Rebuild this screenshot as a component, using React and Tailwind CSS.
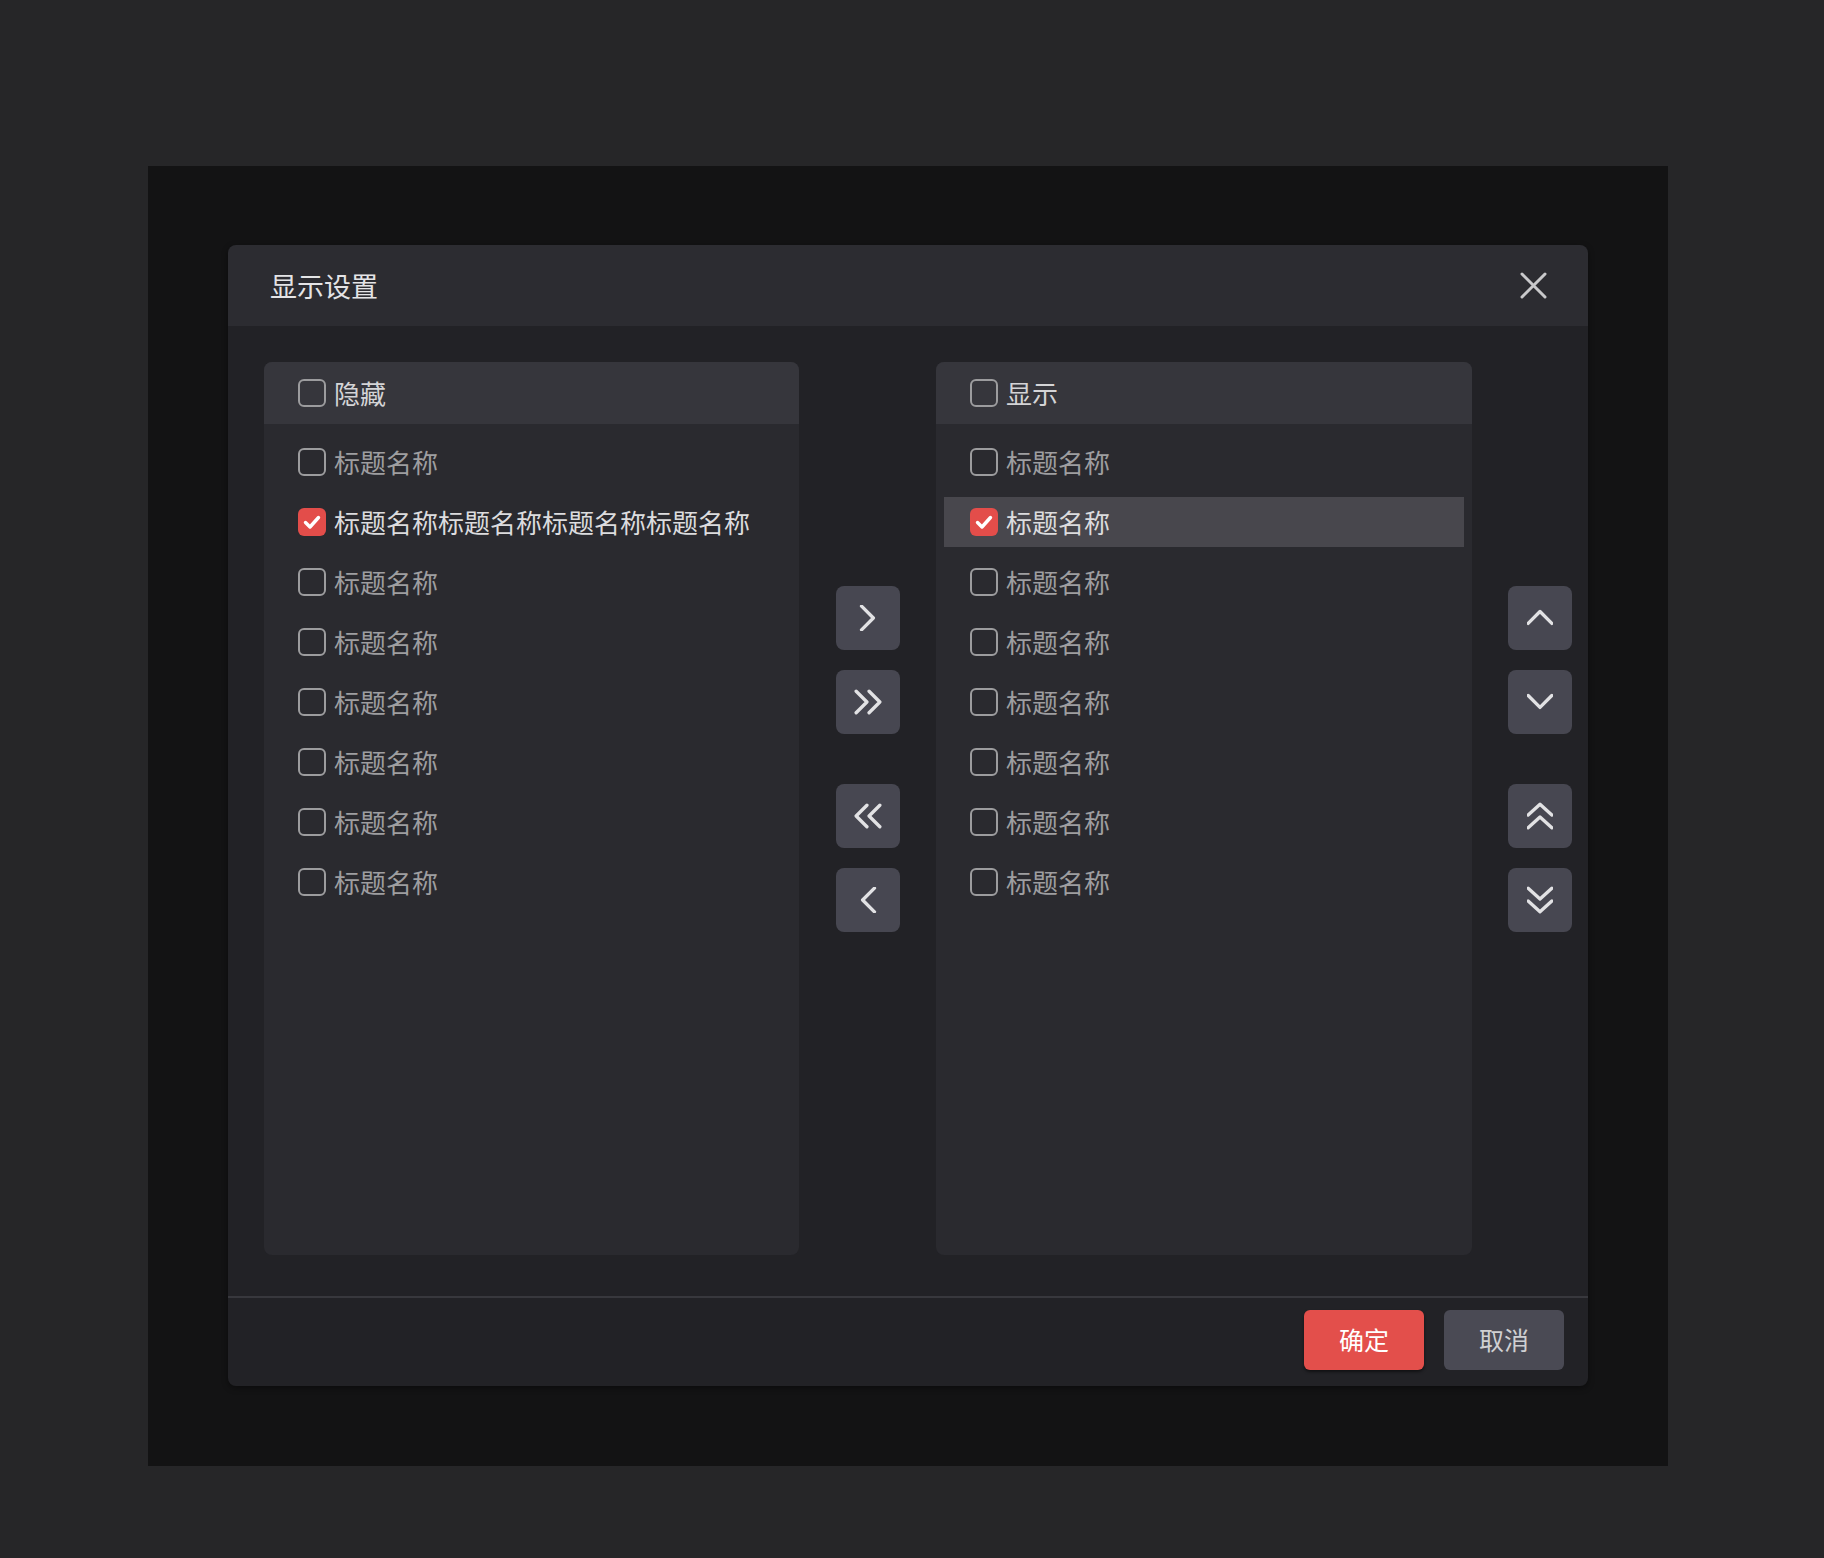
import React from "react";

const font = { fontFamily: '"Noto Sans CJK SC", "Noto Sans", sans-serif' };

const hiddenItems = [
  { label: "标题名称", checked: false },
  { label: "标题名称标题名称标题名称标题名称", checked: true },
  { label: "标题名称", checked: false },
  { label: "标题名称", checked: false },
  { label: "标题名称", checked: false },
  { label: "标题名称", checked: false },
  { label: "标题名称", checked: false },
  { label: "标题名称", checked: false },
];

const shownItems = [
  { label: "标题名称", checked: false },
  { label: "标题名称", checked: true, active: true },
  { label: "标题名称", checked: false },
  { label: "标题名称", checked: false },
  { label: "标题名称", checked: false },
  { label: "标题名称", checked: false },
  { label: "标题名称", checked: false },
  { label: "标题名称", checked: false },
];

const Checkbox = ({ checked }) =>
  checked ? (
    <span className="flex h-[28px] w-[28px] shrink-0 items-center justify-center rounded-[6px] bg-[#e34d4a]">
      <svg width="28" height="28" viewBox="0 0 28 28" fill="none">
        <polyline
          points="7.5,14.5 12,19 20.5,9.5"
          stroke="#ffffff"
          strokeWidth="3.4"
          strokeLinecap="round"
          strokeLinejoin="round"
        />
      </svg>
    </span>
  ) : (
    <span className="h-[28px] w-[28px] shrink-0 rounded-[6px] border-2 border-[#9c9c9e]" />
  );

// chevron drawings, dir = right | left | up | down, double = two stacked
const Chevron = ({ dir, double }) => {
  const paths = {
    right: double ? ["M2 2 L12 12 L2 22", "M14 2 L24 12 L14 22"] : ["M7 1 L18 12 L7 23"],
    left: double ? ["M12 2 L2 12 L12 22", "M24 2 L14 12 L24 22"] : ["M19 1 L8 12 L19 23"],
    up: double ? ["M1 12 L12 2 L23 12", "M1 24 L12 14 L23 24"] : ["M1 18 L12 7 L23 18"],
    down: double ? ["M1 2 L12 12 L23 2", "M1 14 L12 24 L23 14"] : ["M1 7 L12 18 L23 7"],
  };
  const vertical = dir === "up" || dir === "down";
  return (
    <svg
      width={vertical ? 26 : 28}
      height={vertical ? 28 : 26}
      viewBox={vertical ? "0 0 24 26" : "0 0 26 24"}
      fill="none"
    >
      {paths[dir].map((d, i) => (
        <path
          key={i}
          d={d}
          stroke="#e2e2e4"
          strokeWidth="3.1"
          strokeLinecap="round"
          strokeLinejoin="round"
        />
      ))}
    </svg>
  );
};

const IconButton = ({ dir, double, className = "" }) => (
  <button
    className={`flex h-[64px] w-[64px] items-center justify-center rounded-[8px] bg-[#474751] ${className}`}
  >
    <Chevron dir={dir} double={double} />
  </button>
);

const TransferPanel = ({ title, items }) => (
  <div className="flex h-[893px] flex-col overflow-hidden rounded-[8px] bg-[#2a2a2f]">
    <div className="flex h-[62px] shrink-0 items-center gap-[8px] bg-[#36363c] px-[34px]">
      <Checkbox checked={false} />
      <span className="text-[26px] leading-none text-[#d4d4d6]">{title}</span>
    </div>
    <div className="flex flex-col gap-[10px] px-[8px] pt-[13px]">
      {items.map((item, i) => (
        <div
          key={i}
          className={`flex h-[50px] items-center gap-[8px] px-[26px] ${item.active ? "bg-[#48474d]" : ""}`}
        >
          <Checkbox checked={item.checked} />
          <span
            className={`whitespace-nowrap text-[26px] leading-none ${item.checked ? "text-[#dcdcde]" : "text-[#9e9ea0]"}`}
          >
            {item.label}
          </span>
        </div>
      ))}
    </div>
  </div>
);

export default function App() {
  return (
    <div className="h-[1558px] w-full bg-[#262628] pl-[148px] pt-[166px]" style={font}>
      <div className="h-[1300px] w-[1520px] bg-[#131314] pl-[80px] pt-[79px]">
        <div className="w-[1360px] overflow-hidden rounded-[8px] shadow-[0_2px_6px_rgba(0,0,0,0.4)]">
          {/* header */}
          <div className="flex h-[81px] items-center justify-between bg-[#2c2c31] pl-[42px] pr-[41px]">
            <span className="text-[27px] leading-none text-[#e4e4e6]">显示设置</span>
            <svg width="27" height="27" viewBox="0 0 27 27" fill="none">
              <path d="M2 2 L25 25 M25 2 L2 25" stroke="#c9c9cb" strokeWidth="3" strokeLinecap="round" />
            </svg>
          </div>

          {/* body */}
          <div className="flex h-[970px] bg-[#222226] pl-[36px] pt-[36px]">
            <div className="w-[535px]">
              <TransferPanel title="隐藏" items={hiddenItems} />
            </div>
            <div className="ml-[37px] flex w-[64px] flex-col pt-[224px]">
              <IconButton dir="right" />
              <IconButton dir="right" double className="mt-[20px]" />
              <IconButton dir="left" double className="mt-[50px]" />
              <IconButton dir="left" className="mt-[20px]" />
            </div>
            <div className="ml-[36px] w-[536px]">
              <TransferPanel title="显示" items={shownItems} />
            </div>
            <div className="ml-[36px] flex w-[64px] flex-col pt-[224px]">
              <IconButton dir="up" />
              <IconButton dir="down" className="mt-[20px]" />
              <IconButton dir="up" double className="mt-[50px]" />
              <IconButton dir="down" double className="mt-[20px]" />
            </div>
          </div>

          {/* footer */}
          <div className="flex h-[90px] items-start justify-end gap-[20px] border-t-2 border-[#38383d] bg-[#222226] pr-[24px] pt-[12px]">
            <button className="flex h-[60px] w-[120px] items-center justify-center rounded-[6px] bg-[#e34f4b] text-[25px] text-white shadow-[0_2px_3px_rgba(0,0,0,0.5)]">
              确定
            </button>
            <button className="flex h-[60px] w-[120px] items-center justify-center rounded-[6px] bg-[#4a4a54] text-[25px] text-[#d0d0d2]">
              取消
            </button>
          </div>
        </div>
      </div>
    </div>
  );
}
